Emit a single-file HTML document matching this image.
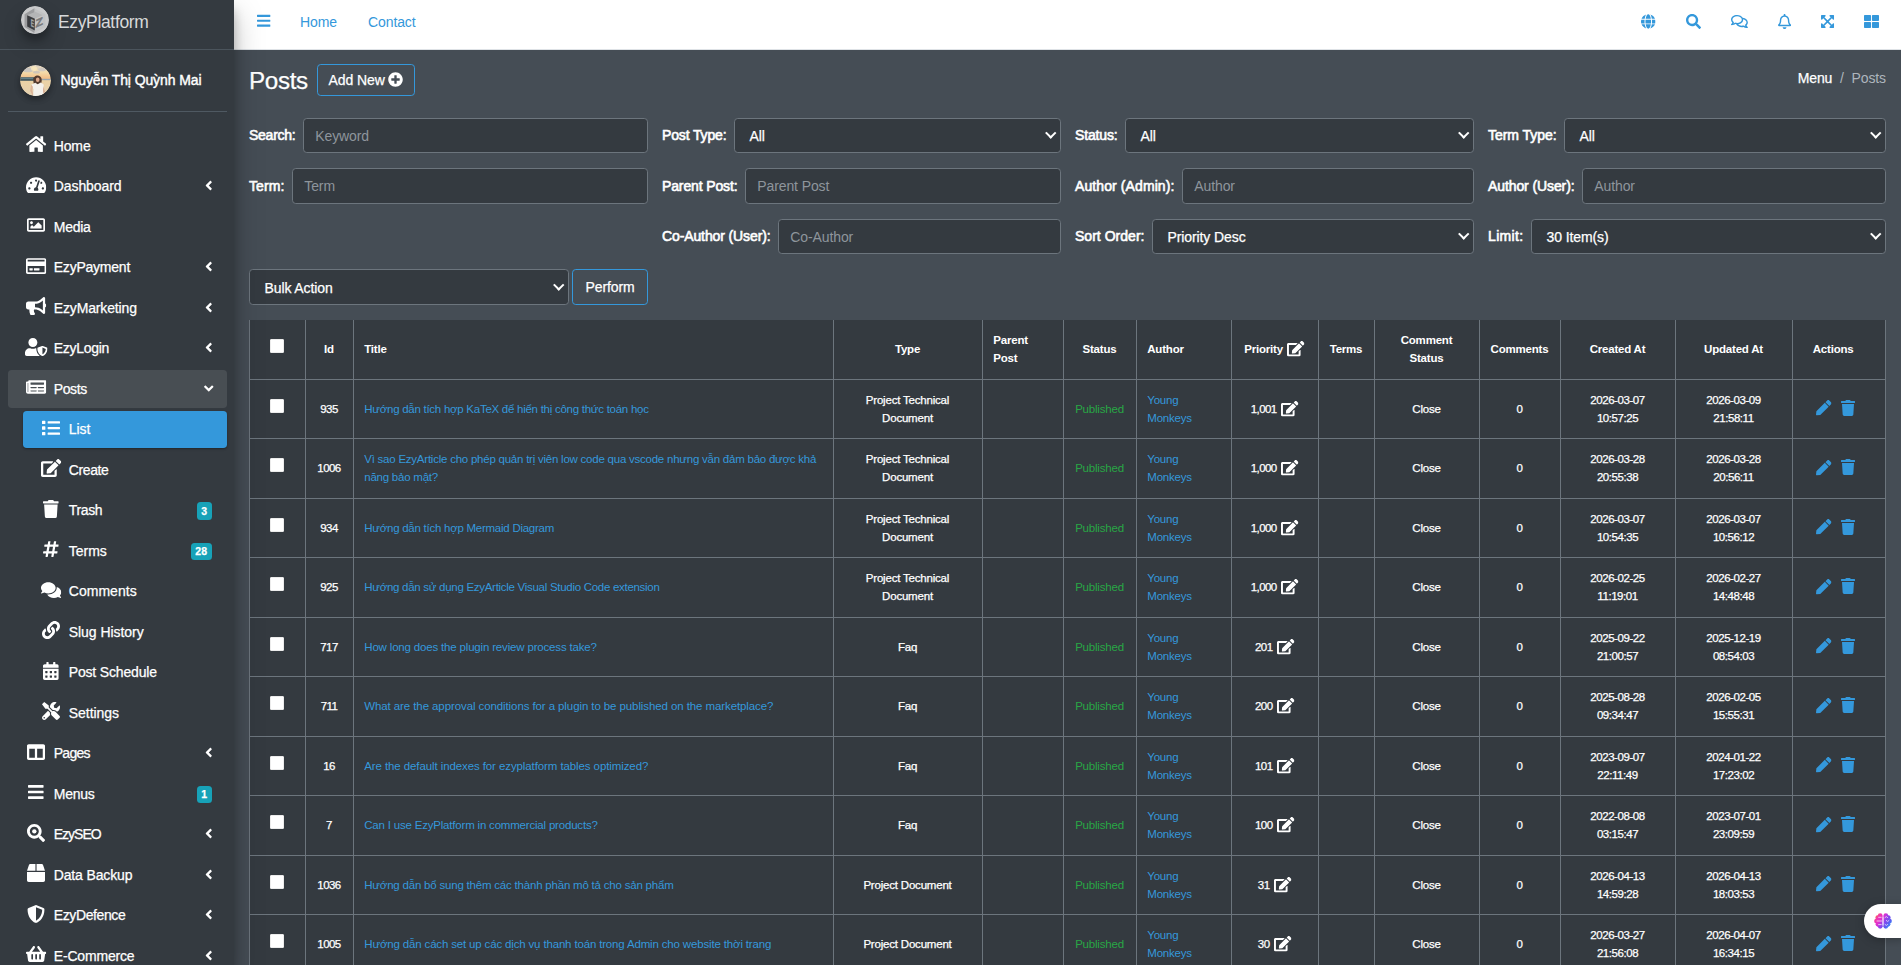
<!DOCTYPE html>
<html lang="en"><head><meta charset="utf-8"><title>Posts</title>
<style>
*{box-sizing:border-box}
html,body{margin:0;padding:0}
body{width:1903px;height:966px;overflow:hidden;background:#fff;font-family:"Liberation Sans",sans-serif;font-size:14px;line-height:22.5px;color:#fff;-webkit-text-stroke:.25px #fff}
a{text-decoration:none;color:#3498db}
.i{height:1em;width:auto;fill:currentColor;vertical-align:-.125em;overflow:visible}
.app{position:absolute;left:0;top:0;width:1901px;height:965px;overflow:hidden;background:#454d55}
/* sidebar */
.sidebar{position:absolute;left:0;top:0;width:234px;height:965px;background:#343a40;box-shadow:0 14px 28px rgba(0,0,0,.25),0 10px 10px rgba(0,0,0,.22);z-index:10}
.brand{display:block;height:50px;border-bottom:1px solid #4b545c;position:relative;color:rgba(255,255,255,.85)}
.logo{position:absolute;left:21px;top:6.300px;width:28px;height:28px;border-radius:50%;box-shadow:0 10px 20px rgba(0,0,0,.19),0 6px 6px rgba(0,0,0,.23)}
.bt{position:absolute;left:58px;top:8px;font-size:17.500px;line-height:28px;letter-spacing:-.35px;color:rgba(255,255,255,.82);-webkit-text-stroke:0}
.user{position:absolute;left:7.5px;right:7.5px;top:50px;height:62px;border-bottom:1px solid #4f5962}
svg text{-webkit-text-stroke:0}
.ava{position:absolute;left:12.500px;top:14.700px;width:31px;height:31px;border-radius:50%;box-shadow:0 3px 6px rgba(0,0,0,.16),0 3px 6px rgba(0,0,0,.23)}
.un{position:absolute;left:53px;top:18.500px;font-size:14px;line-height:22.500px;color:#fff;letter-spacing:-.1px;white-space:nowrap;-webkit-text-stroke:.4px #fff}
.nav{list-style:none;margin:0;padding:0;position:absolute;left:7.5px;right:7.5px;top:127.300px}
.nl{margin:0 0 3px 0;height:37.500px}
.nl a{display:block;position:relative;height:37.500px;border-radius:3.750px;color:#fff;padding:7.500px 15px}
.nl.sub{margin-left:15px}
.nl.open a{background:rgba(255,255,255,.1)}
.nl.act a{background:#3498db;box-shadow:0 1px 3px rgba(0,0,0,.12),0 1px 2px rgba(0,0,0,.24)}
.ni{display:inline-block;width:24px;margin-left:1.750px;margin-right:5.500px;text-align:center;font-size:18px;line-height:22.500px;vertical-align:top}
.ni .i{vertical-align:-1.500px}
.nl p{display:inline;margin:0;font-size:14px;letter-spacing:-.1px;white-space:nowrap}
.arr{position:absolute;right:14.300px;top:10.500px;font-size:15px;line-height:15px}
.arr .i{height:15px;vertical-align:top}
.arr.dn .i{transform:rotate(-90deg)}
.bdg{position:absolute;right:15px;top:10.500px;background:#17a2b8;color:#fff;font-weight:700;font-size:10.500px;line-height:11px;padding:3.300px 4.500px;border-radius:3.500px}
/* topbar */
.topbar{position:absolute;left:234px;top:0;width:1667px;height:50px;background:#fff;border-bottom:1px solid #dee2e6}
.topbar>*{position:absolute;margin-left:-234px}
.tb-i{top:11px;font-size:15.500px;color:#3498db;line-height:22.500px}
.tl{top:11px;font-size:14px;line-height:22.500px;color:#3498db;letter-spacing:-.1px;-webkit-text-stroke:0}
.tb-r{top:11.500px;font-size:15px;color:#3498db;line-height:22.500px}
/* content */
.content{position:absolute;left:234px;top:50px;width:1667px;padding:0 15px}
.hdr{position:relative;height:67.700px}
.hdr h1{position:absolute;left:0;top:15px;margin:0;font-size:24.200px;line-height:32px;font-weight:400;letter-spacing:-.35px}
.btn{display:inline-block;border:1px solid #3498db;border-radius:3.750px;color:#fff;font-size:14px;line-height:22.500px;text-align:center;white-space:nowrap;letter-spacing:-.1px}
.addnew{position:absolute;left:68px;top:14px;width:98px;height:32px;padding:3.750px 0 0 0}
.addnew .pc{height:15px;vertical-align:-2.500px;margin-left:0}
.crumb{position:absolute;right:0;top:17px;font-size:14px;line-height:22.500px;letter-spacing:-.1px}
.crumb .sl{color:#adb5bd;margin:0 7.700px;-webkit-text-stroke:0}
.crumb .p{color:#adb5bd;-webkit-text-stroke:0}
.fr{display:flex;margin:0 -7.500px 14.750px -7.500px;height:35.750px}
.fc{flex:0 0 25%;max-width:25%;padding:0 6.500px 0 7.500px;display:flex;align-items:center}
.fc:last-child{padding-right:7.500px}
.fc label{position:relative;top:.5px;font-weight:400;font-size:14px;letter-spacing:.05px;-webkit-text-stroke:.6px #fff;margin-right:7.500px;white-space:nowrap}
.inp{display:block;flex:1 1 auto;height:35.750px;background:#343a40;border:1px solid #6c757d;border-radius:3.750px;padding:5.625px 11.250px;font-size:14px;line-height:22.500px;color:#fff;letter-spacing:-.1px;white-space:nowrap;position:relative}
.inp.ph{color:#8e959c;-webkit-text-stroke:0}
.inp.sel{padding-left:14.500px;padding-top:6.300px}
.inp.sel:after{content:"";position:absolute;right:5.750px;top:10.600px;width:5.500px;height:5.500px;border-right:2px solid #fff;border-bottom:2px solid #fff;transform:rotate(45deg)}
.bulk .inp{flex:0 0 320px}
.perform{margin-left:3px;width:76px;flex:0 0 76px;height:35.750px;padding:5.625px 0}
/* table */
.tbl{border-collapse:separate;border-spacing:0;table-layout:fixed;width:1637px;margin-top:15.140px;background:#343a40;font-size:11.500px;line-height:18px;color:#fff}
.tbl th,.tbl td{border:0 solid #6c757d;border-width:0 1px 1px 0;padding:11.250px 11.250px 11.250px 10.250px;vertical-align:middle;text-align:left;letter-spacing:-.2px}
.tbl th{font-weight:700;height:59.500px;-webkit-text-stroke:0}
.tbl tr>*:first-child{border-left-width:1px}
.tbl td{height:59.500px}
.tbl .c{text-align:center}
.tbl .pub{color:#28a745;-webkit-text-stroke:0}
.tbl td a{color:#3498db;-webkit-text-stroke:0}
.cb{display:inline-block;width:14px;height:14px;background:#fff;border:1px solid #ececec;border-radius:1px;vertical-align:top;margin-top:-.9px;margin-left:.8px}
.ed{height:15.500px;vertical-align:-3.500px;margin-left:1.500px;margin-top:-3px}
.act{color:#3498db}
.act .pn{height:15.500px;margin-right:9px;vertical-align:-3px}
.act .tr{height:16px;vertical-align:-3px}
.tbl td.act{padding-right:17px}
.tbl th:last-child{padding-right:22px}
.fab{position:absolute;left:1864px;top:904px;width:40px;height:34px;background:#fff;border-radius:17px 0 0 17px;box-shadow:0 2px 10px rgba(0,0,0,.25);z-index:20}
.fab svg{position:absolute;left:9.500px;top:9px}
.fr:first-child .inp{padding-top:6.325px}
.fr:first-child .inp.sel{padding-top:6.800px}
.fr:first-child label{top:0}
.fr:nth-child(3) label{top:-.4px}
.fr:nth-child(3) .inp.ph{padding-top:6.500px}
.fr:nth-child(4) .inp.sel{padding-top:7.100px}
.tbl td.n{letter-spacing:-.55px}
.tbl td.d{letter-spacing:-.45px}
</style></head><body>
<svg width="0" height="0" style="position:absolute"><defs><symbol id="i-angle" viewBox="0 0 256 512"><path d="M31.7 239l136-136c9.4-9.4 24.6-9.4 33.9 0l22.6 22.6c9.4 9.4 9.4 24.6 0 33.9L127.9 256l96.4 96.4c9.4 9.4 9.4 24.6 0 33.9L201.7 409c-9.4 9.4-24.6 9.4-33.9 0l-136-136c-9.5-9.4-9.5-24.6-.1-34z"/></symbol><symbol id="i-bars" viewBox="0 0 448 512"><path d="M16 132h416c8.837 0 16-7.163 16-16V76c0-8.837-7.163-16-16-16H16C7.163 60 0 67.163 0 76v40c0 8.837 7.163 16 16 16zm0 160h416c8.837 0 16-7.163 16-16v-40c0-8.837-7.163-16-16-16H16c-8.837 0-16 7.163-16 16v40c0 8.837 7.163 16 16 16zm0 160h416c8.837 0 16-7.163 16-16v-40c0-8.837-7.163-16-16-16H16c-8.837 0-16 7.163-16 16v40c0 8.837 7.163 16 16 16z"/></symbol><symbol id="i-basket" viewBox="0 0 576 512"><path d="M576 216v16c0 13.255-10.745 24-24 24h-8l-26.113 182.788C514.509 462.435 494.257 480 470.37 480H105.63c-23.887 0-44.139-17.565-47.518-41.212L32 256h-8c-13.255 0-24-10.745-24-24v-16c0-13.255 10.745-24 24-24h67.341l106.78-146.821c10.395-14.292 30.407-17.453 44.701-7.058 14.293 10.395 17.453 30.408 7.058 44.701L170.477 192h235.046L326.12 82.821c-10.395-14.292-7.234-34.306 7.059-44.701 14.291-10.395 34.306-7.235 44.701 7.058L484.659 192H552c13.255 0 24 10.745 24 24zM312 392V280c0-13.255-10.745-24-24-24s-24 10.745-24 24v112c0 13.255 10.745 24 24 24s24-10.745 24-24zm112 0V280c0-13.255-10.745-24-24-24s-24 10.745-24 24v112c0 13.255 10.745 24 24 24s24-10.745 24-24zm-224 0V280c0-13.255-10.745-24-24-24s-24 10.745-24 24v112c0 13.255 10.745 24 24 24s24-10.745 24-24z"/></symbol><symbol id="i-bellr" viewBox="0 0 448 512"><path d="M439.39 362.29c-19.320-20.760-55.470-51.990-55.470-154.290 0-77.700-54.480-139.900-127.940-155.160V32c0-17.670-14.320-32-31.980-32s-31.980 14.330-31.980 32v20.840C118.560 68.100 64.080 130.300 64.080 208c0 102.300-36.150 133.530-55.470 154.290-6 6.450-8.660 14.160-8.610 21.710.11 16.400 12.980 32 32.100 32h383.800c19.120 0 32-15.600 32.100-32 .05-7.550-2.610-15.270-8.610-21.710zM67.530 368c21.220-27.970 44.420-74.330 44.530-159.420 0-.2-.06-.38-.06-.58 0-61.860 50.140-112 112-112s112 50.140 112 112c0 .2-.06.38-.06.58.11 85.100 23.310 131.460 44.530 159.420H67.530zM224 512c35.320 0 63.970-28.650 63.970-64H160.030c0 35.350 28.650 64 63.970 64z"/></symbol><symbol id="i-box" viewBox="0 0 512 512"><path d="M509.5 184.6L458.9 32.8C452.4 13.2 434.1 0 413.4 0H272v192h238.700c-.4-2.5-.4-5-1.200-7.400zM240 0H98.600c-20.700 0-39 13.200-45.500 32.800L2.500 184.600c-.8 2.400-.8 4.900-1.200 7.400H240V0zM0 224v240c0 26.500 21.500 48 48 48h416c26.500 0 48-21.500 48-48V224H0z"/></symbol><symbol id="i-bullhorn" viewBox="0 0 576 512"><path d="M576 240c0-23.63-12.95-44.04-32-55.120V32.010C544 23.260 537.020 0 512 0c-7.120 0-14.190 2.380-19.980 7.020l-85.030 68.030C364.280 109.190 310.660 128 256 128H64c-35.350 0-64 28.650-64 64v96c0 35.350 28.650 64 64 64h33.700c-1.390 10.480-2.180 21.140-2.180 32 0 39.770 9.260 77.350 25.560 110.940 5.190 10.690 16.520 17.060 28.400 17.060h74.280c26.050 0 41.690-29.840 25.900-50.560-16.400-21.520-26.150-48.360-26.150-77.440 0-11.110 1.620-21.790 4.410-32H256c54.660 0 108.280 18.810 150.980 52.950l85.030 68.030a32.023 32.023 0 0 0 19.980 7.020c24.920 0 32-22.780 32-32V295.130C563.050 284.040 576 263.630 576 240zm-96 141.420l-33.050-26.440C392.950 311.780 325.120 288 256 288v-96c69.120 0 136.950-23.780 190.950-66.980L480 98.580v282.840z"/></symbol><symbol id="i-calendar" viewBox="0 0 448 512"><path d="M0 464c0 26.500 21.500 48 48 48h352c26.500 0 48-21.500 48-48V192H0v272zm320-196c0-6.600 5.400-12 12-12h40c6.600 0 12 5.400 12 12v40c0 6.600-5.400 12-12 12h-40c-6.600 0-12-5.400-12-12v-40zm0 128c0-6.600 5.400-12 12-12h40c6.600 0 12 5.400 12 12v40c0 6.600-5.400 12-12 12h-40c-6.600 0-12-5.400-12-12v-40zM192 268c0-6.600 5.400-12 12-12h40c6.600 0 12 5.400 12 12v40c0 6.600-5.400 12-12 12h-40c-6.600 0-12-5.400-12-12v-40zm0 128c0-6.600 5.400-12 12-12h40c6.600 0 12 5.400 12 12v40c0 6.600-5.400 12-12 12h-40c-6.600 0-12-5.400-12-12v-40zM64 268c0-6.600 5.400-12 12-12h40c6.600 0 12 5.400 12 12v40c0 6.600-5.400 12-12 12H76c-6.600 0-12-5.400-12-12v-40zm0 128c0-6.600 5.400-12 12-12h40c6.600 0 12 5.400 12 12v40c0 6.600-5.400 12-12 12H76c-6.600 0-12-5.400-12-12v-40zM400 64h-48V16c0-8.800-7.200-16-16-16h-32c-8.800 0-16 7.200-16 16v48H160V16c0-8.800-7.200-16-16-16h-32c-8.800 0-16 7.200-16 16v48H48C21.500 64 0 85.500 0 112v48h448v-48c0-26.500-21.500-48-48-48z"/></symbol><symbol id="i-columns" viewBox="0 0 512 512"><path d="M464 32H48C21.49 32 0 53.49 0 80v352c0 26.51 21.49 48 48 48h416c26.51 0 48-21.49 48-48V80c0-26.51-21.49-48-48-48zM224 416H64V160h160v256zm224 0H288V160h160v256z"/></symbol><symbol id="i-comments" viewBox="0 0 576 512"><path d="M416 192c0-88.4-93.1-160-208-160S0 103.6 0 192c0 34.3 14.1 65.9 38 92-13.4 30.2-35.5 54.2-35.8 54.5-2.2 2.3-2.8 5.7-1.5 8.700S4.800 352 8 352c36.600 0 66.900-12.300 88.700-25 32.200 15.700 70.300 25 111.300 25 114.900 0 208-71.600 208-160zm122 220c23.900-26 38-57.700 38-92 0-66.900-53.500-124.200-129.300-148.100.900 6.600 1.300 13.300 1.300 20.100 0 105.900-107.700 192-240 192-10.800 0-21.300-.800-31.700-1.900C207.800 439.600 281.800 480 368 480c41 0 79.100-9.200 111.300-25 21.800 12.700 52.100 25 88.700 25 3.200 0 6.100-1.900 7.300-4.800 1.300-2.900.700-6.300-1.500-8.700-.300-.300-22.400-24.200-35.800-54.500z"/></symbol><symbol id="i-commentsr" viewBox="0 0 576 512"><path d="M532 386.200c27.500-27.100 44-61.100 44-98.200 0-80-76.500-146.100-176.200-157.900C368.300 72.500 294.300 32 208 32 93.100 32 0 103.600 0 192c0 37 16.500 71 44 98.200-15.300 30.700-37.300 54.500-37.700 54.900-6.300 6.700-8.100 16.500-4.400 25 3.600 8.500 12 14 21.200 14 53.500 0 96.700-20.200 125.200-38.800 9.200 2.100 18.700 3.700 28.400 4.900C208.100 407.600 281.800 448 368 448c20.800 0 40.800-2.400 59.800-6.800C456.300 459.700 499.400 480 553 480c9.200 0 17.500-5.500 21.200-14 3.600-8.500 1.900-18.300-4.400-25-.4-.3-22.500-24.100-37.800-54.800zm-392.800-92.300L122.100 305c-14.100 9.100-28.500 16.300-43.100 21.400 2.700-4.700 5.400-9.700 8-14.800l15.500-31.100L77.700 256C64.200 242.600 48 220.700 48 192c0-60.700 73.300-112 160-112s160 51.300 160 112-73.300 112-160 112c-16.500 0-33-1.900-49-5.600l-19.800-4.500zM498.300 352l-24.700 24.400 15.500 31.100c2.600 5.100 5.300 10.100 8 14.800-14.600-5.100-29-12.300-43.100-21.400l-17.100-11.100-19.900 4.600c-16 3.700-32.500 5.600-49 5.600-54 0-102.200-20.100-131.300-49.700C338 339.500 416 272.900 416 192c0-3.400-.4-6.700-.7-10C479.700 196.500 528 238.800 528 288c0 28.700-16.200 50.600-29.700 64z"/></symbol><symbol id="i-creditcardr" viewBox="0 0 576 512"><path d="M527.9 32H48.1C21.5 32 0 53.5 0 79.9v352.200C0 458.500 21.500 480 48.100 480h479.800c26.600 0 48.100-21.500 48.100-47.900V79.900c0-26.400-21.500-47.900-48.100-47.900zM54.100 80h467.800c3.300 0 6 2.700 6 6v42H48.100V86c0-3.300 2.700-6 6-6zm467.800 352H54.100c-3.300 0-6-2.700-6-6V256h479.800v170c0 3.300-2.700 6-6 6zM192 332v40c0 6.600-5.400 12-12 12h-72c-6.600 0-12-5.400-12-12v-40c0-6.600 5.400-12 12-12h72c6.600 0 12 5.400 12 12zm192 0v40c0 6.600-5.400 12-12 12H236c-6.600 0-12-5.400-12-12v-40c0-6.600 5.400-12 12-12h136c6.600 0 12 5.400 12 12z"/></symbol><symbol id="i-edit" viewBox="0 0 576 512"><path d="M402.6 83.2l90.2 90.2c3.8 3.8 3.8 10 0 13.8L274.4 405.6l-92.8 10.3c-12.4 1.4-22.9-9.1-21.5-21.5l10.3-92.8L388.8 83.2c3.8-3.8 10-3.8 13.8 0zm162-22.9l-48.8-48.8c-15.2-15.2-39.9-15.2-55.2 0l-35.4 35.4c-3.8 3.8-3.8 10 0 13.8l90.2 90.2c3.8 3.8 10 3.8 13.8 0l35.4-35.4c15.2-15.3 15.2-40 0-55.2zM384 346.2V448H64V128h229.8c3.2 0 6.2-1.3 8.5-3.5l40-40c7.6-7.6 2.2-20.5-8.5-20.5H48C21.5 64 0 85.5 0 112v352c0 26.5 21.5 48 48 48h352c26.5 0 48-21.5 48-48V306.2c0-10.7-12.9-16-20.5-8.5l-40 40c-2.200 2.300-3.500 5.300-3.500 8.500z"/></symbol><symbol id="i-expand" viewBox="0 0 448 512"><path d="M448 344v112a23.940 23.940 0 0 1-24 24H312c-21.390 0-32.090-25.900-17-41l36.200-36.200L224 295.600 116.770 402.900 153 439c15.090 15.100 4.390 41-17 41H24a23.940 23.940 0 0 1-24-24V344c0-21.400 25.890-32.100 41-17l36.190 36.200L184.460 256 77.180 148.700 41 185c-15.100 15.100-41 4.400-41-17V56a23.940 23.940 0 0 1 24-24h112c21.390 0 32.090 25.900 17 41l-36.200 36.200L224 216.400l107.230-107.300L295 73c-15.090-15.100-4.390-41 17-41h112a23.940 23.940 0 0 1 24 24v112c0 21.400-25.890 32.100-41 17l-36.190-36.200L263.540 256l107.280 107.300L407 327.100c15.100-15.200 41-4.500 41 16.900z"/></symbol><symbol id="i-globe" viewBox="0 0 496 512"><path d="M336.5 160C322 70.700 287.800 8 248 8s-74 62.700-88.500 152h177zM152 256c0 22.200 1.200 43.500 3.300 64h185.300c2.100-20.500 3.300-41.800 3.300-64s-1.200-43.500-3.300-64H155.300c-2.100 20.500-3.300 41.800-3.300 64zm324.700-96c-28.600-67.900-86.500-120.400-158-141.600 24.400 33.800 41.200 84.700 50 141.600h108zM177.200 18.400C105.800 39.600 47.800 92.100 19.300 160h108c8.700-56.900 25.500-107.800 49.900-141.600zM487.400 192H372.700c2.100 21 3.300 42.500 3.300 64s-1.200 43-3.300 64h114.600c5.500-20.500 8.600-41.800 8.600-64s-3.100-43.500-8.500-64zM120 256c0-21.500 1.200-43 3.300-64H8.600C3.200 212.500 0 233.800 0 256s3.200 43.500 8.600 64h114.600c-2-21-3.200-42.500-3.200-64zm39.500 96c14.500 89.300 48.700 152 88.500 152s74-62.700 88.500-152h-177zm159.300 141.600c71.400-21.200 129.400-73.700 158-141.600h-108c-8.800 56.900-25.600 107.800-50 141.600zM19.300 352c28.600 67.900 86.500 120.400 158 141.600-24.400-33.800-41.200-84.700-50-141.600h-108z"/></symbol><symbol id="i-hashtag" viewBox="0 0 448 512"><path d="M440.667 182.109l7.143-40c1.313-7.355-4.342-14.109-11.813-14.109h-74.81l14.623-81.891C377.123 38.754 371.468 32 363.997 32h-40.632a12 12 0 0 0-11.813 9.891L296.175 128H197.54l14.623-81.891C213.477 38.754 207.822 32 200.35 32h-40.632a12 12 0 0 0-11.813 9.891L132.528 128H53.432a12 12 0 0 0-11.813 9.891l-7.143 40C33.163 185.246 38.818 192 46.289 192h74.81L98.242 320H19.146a12 12 0 0 0-11.813 9.891l-7.143 40C-1.123 377.246 4.532 384 12.003 384h74.81L72.19 465.891C70.877 473.246 76.532 480 84.003 480h40.632a12 12 0 0 0 11.813-9.891L151.826 384h98.634l-14.623 81.891C234.523 473.246 240.178 480 247.65 480h40.632a12 12 0 0 0 11.813-9.891L315.472 384h79.096a12 12 0 0 0 11.813-9.891l7.143-40c1.313-7.355-4.342-14.109-11.813-14.109h-74.81l22.857-128h79.096a12 12 0 0 0 11.813-9.891zM261.889 320h-98.634l22.857-128h98.634l-22.857 128z"/></symbol><symbol id="i-home" viewBox="0 0 576 512"><path d="M280.37 148.26L96 300.11V464a16 16 0 0 0 16 16l112.06-.29a16 16 0 0 0 15.92-16V368a16 16 0 0 1 16-16h64a16 16 0 0 1 16 16v95.64a16 16 0 0 0 16 16.05L464 480a16 16 0 0 0 16-16V300L295.67 148.26a12.19 12.19 0 0 0-15.3 0zM571.6 251.47L488 182.56V44.05a12 12 0 0 0-12-12h-56a12 12 0 0 0-12 12v72.61L318.47 43a48 48 0 0 0-61 0L4.34 251.47a12 12 0 0 0-1.6 16.9l25.5 31A12 12 0 0 0 45.15 301l235.22-193.74a12.19 12.19 0 0 1 15.3 0L530.9 301a12 12 0 0 0 16.9-1.6l25.5-31a12 12 0 0 0-1.7-16.93z"/></symbol><symbol id="i-imager" viewBox="0 0 512 512"><path d="M464 64H48C21.49 64 0 85.49 0 112v288c0 26.51 21.49 48 48 48h416c26.51 0 48-21.49 48-48V112c0-26.51-21.49-48-48-48zm-6 336H54a6 6 0 0 1-6-6V118a6 6 0 0 1 6-6h404a6 6 0 0 1 6 6v276a6 6 0 0 1-6 6zM128 152c-22.091 0-40 17.909-40 40s17.909 40 40 40 40-17.909 40-40-17.909-40-40-40zM96 352h320v-80l-87.515-87.515c-4.686-4.686-12.284-4.686-16.971 0L192 304l-39.515-39.515c-4.686-4.686-12.284-4.686-16.971 0L96 304v48z"/></symbol><symbol id="i-link" viewBox="0 0 512 512"><path d="M326.612 185.391c59.747 59.809 58.927 155.698.36 214.59-.11.12-.24.25-.36.37l-67.2 67.2c-59.27 59.27-155.699 59.262-214.96 0-59.27-59.26-59.27-155.7 0-214.96l37.106-37.106c9.84-9.84 26.786-3.3 27.294 10.606.648 17.722 3.826 35.527 9.69 52.721 1.986 5.822.567 12.262-3.783 16.612l-13.087 13.087c-28.026 28.026-28.905 73.66-1.155 101.96 28.024 28.579 74.086 28.749 102.325.51l67.2-67.19c28.191-28.191 28.073-73.757 0-101.83-3.701-3.694-7.429-6.564-10.341-8.569a16.037 16.037 0 0 1-6.947-12.606c-.396-10.567 3.348-21.456 11.698-29.806l21.054-21.055c5.521-5.521 14.182-6.199 20.584-1.731a152.482 152.482 0 0 1 20.522 17.197zM467.547 44.449c-59.261-59.262-155.69-59.27-214.96 0l-67.2 67.2c-.12.12-.25.25-.36.37-58.566 58.892-59.387 154.781.36 214.59a152.454 152.454 0 0 0 20.521 17.196c6.402 4.468 15.064 3.789 20.584-1.731l21.054-21.055c8.35-8.35 12.094-19.239 11.698-29.806a16.037 16.037 0 0 0-6.947-12.606c-2.912-2.005-6.64-4.875-10.341-8.569-28.073-28.073-28.191-73.639 0-101.83l67.2-67.19c28.239-28.239 74.3-28.069 102.325.51 27.75 28.3 26.872 73.934-1.155 101.96l-13.087 13.087c-4.35 4.35-5.769 10.79-3.783 16.612 5.864 17.194 9.042 34.999 9.69 52.721.509 13.906 17.454 20.446 27.294 10.606l37.106-37.106c59.271-59.259 59.271-155.699.001-214.959z"/></symbol><symbol id="i-list" viewBox="0 0 512 512"><path d="M80 368H16a16 16 0 0 0-16 16v64a16 16 0 0 0 16 16h64a16 16 0 0 0 16-16v-64a16 16 0 0 0-16-16zm0-320H16A16 16 0 0 0 0 64v64a16 16 0 0 0 16 16h64a16 16 0 0 0 16-16V64a16 16 0 0 0-16-16zm0 160H16a16 16 0 0 0-16 16v64a16 16 0 0 0 16 16h64a16 16 0 0 0 16-16v-64a16 16 0 0 0-16-16zm416 176H176a16 16 0 0 0-16 16v32a16 16 0 0 0 16 16h320a16 16 0 0 0 16-16v-32a16 16 0 0 0-16-16zm0-320H176a16 16 0 0 0-16 16v32a16 16 0 0 0 16 16h320a16 16 0 0 0 16-16V80a16 16 0 0 0-16-16zm0 160H176a16 16 0 0 0-16 16v32a16 16 0 0 0 16 16h320a16 16 0 0 0 16-16v-32a16 16 0 0 0-16-16z"/></symbol><symbol id="i-newspaper" viewBox="0 0 576 512"><path d="M552 64H88c-13.255 0-24 10.745-24 24v8H24c-13.255 0-24 10.745-24 24v272c0 30.928 25.072 56 56 56h472c26.510 0 48-21.490 48-48V88c0-13.255-10.745-24-24-24zM56 400a8 8 0 0 1-8-8V144h16v248a8 8 0 0 1-8 8zm236-16H140c-6.627 0-12-5.373-12-12v-8c0-6.627 5.373-12 12-12h152c6.627 0 12 5.373 12 12v8c0 6.627-5.373 12-12 12zm208 0H348c-6.627 0-12-5.373-12-12v-8c0-6.627 5.373-12 12-12h152c6.627 0 12 5.373 12 12v8c0 6.627-5.373 12-12 12zm-208-96H140c-6.627 0-12-5.373-12-12v-8c0-6.627 5.373-12 12-12h152c6.627 0 12 5.373 12 12v8c0 6.627-5.373 12-12 12zm208 0H348c-6.627 0-12-5.373-12-12v-8c0-6.627 5.373-12 12-12h152c6.627 0 12 5.373 12 12v8c0 6.627-5.373 12-12 12zm0-96H140c-6.627 0-12-5.373-12-12v-40c0-6.627 5.373-12 12-12h360c6.627 0 12 5.373 12 12v40c0 6.627-5.373 12-12 12z"/></symbol><symbol id="i-pen" viewBox="0 0 512 512"><path d="M290.74 93.24l128.02 128.02-277.99 277.99-114.14 12.6C11.35 513.54-1.56 500.62.14 485.34l12.7-114.22 277.9-277.88zm207.2-19.06l-60.11-60.11c-18.75-18.75-49.16-18.75-67.91 0l-56.55 56.55 128.02 128.02 56.55-56.55c18.75-18.76 18.75-49.16 0-67.91z"/></symbol><symbol id="i-pluscircle" viewBox="0 0 512 512"><path d="M256 8C119 8 8 119 8 256s111 248 248 248 248-111 248-248S393 8 256 8zm144 276c0 6.6-5.4 12-12 12h-92v92c0 6.6-5.4 12-12 12h-56c-6.6 0-12-5.4-12-12v-92h-92c-6.6 0-12-5.4-12-12v-56c0-6.6 5.4-12 12-12h92v-92c0-6.6 5.4-12 12-12h56c6.6 0 12 5.4 12 12v92h92c6.6 0 12 5.4 12 12v56z"/></symbol><symbol id="i-search" viewBox="0 0 512 512"><path d="M505 442.7L405.3 343c-4.5-4.5-10.6-7-17-7H372c27.6-35.3 44-79.7 44-128C416 93.1 322.9 0 208 0S0 93.1 0 208s93.1 208 208 208c48.3 0 92.7-16.4 128-44v16.3c0 6.4 2.5 12.5 7 17l99.7 99.7c9.4 9.4 24.6 9.4 33.9 0l28.3-28.3c9.4-9.4 9.4-24.6.1-34zM208 336c-70.7 0-128-57.2-128-128 0-70.7 57.2-128 128-128 70.7 0 128 57.2 128 128 0 70.7-57.2 128-128 128z"/></symbol><symbol id="i-seo" viewBox="0 0 512 512"><path d="M505 442.7L405.3 343c-4.5-4.5-10.6-7-17-7H372c27.6-35.3 44-79.7 44-128C416 93.1 322.9 0 208 0S0 93.1 0 208s93.1 208 208 208c48.3 0 92.7-16.4 128-44v16.3c0 6.4 2.5 12.5 7 17l99.7 99.7c9.4 9.4 24.6 9.4 33.9 0l28.3-28.3c9.4-9.4 9.4-24.6.1-34zM208 336c-70.7 0-128-57.2-128-128 0-70.7 57.2-128 128-128 70.7 0 128 57.2 128 128 0 70.7-57.2 128-128 128z"/><circle cx="208" cy="208" r="62"/></symbol><symbol id="i-shield" viewBox="0 0 512 512"><path d="M466.5 83.7l-192-80a48.150 48.150 0 0 0-36.900 0l-192 80C27.700 91.100 16 108.600 16 128c0 198.500 114.500 335.700 221.500 380.300 11.800 4.900 25.100 4.900 36.900 0C360.100 472.600 496 349.300 496 128c0-19.400-11.700-36.900-29.500-44.300zM256.100 446.300l-.1-381 175.900 73.300c-3.300 151.400-82.100 261.100-175.800 307.700z"/></symbol><symbol id="i-tacho" viewBox="0 0 576 512"><path d="M288 32C128.940 32 0 160.940 0 320c0 52.800 14.250 102.260 39.060 144.800 5.610 9.620 16.300 15.200 27.440 15.200h443c11.140 0 21.830-5.580 27.440-15.200C561.750 422.260 576 372.800 576 320c0-159.060-128.940-288-288-288zm0 64c14.710 0 26.580 10.130 30.320 23.650-1.110 2.260-2.640 4.230-3.450 6.670l-9.220 27.670c-5.130 3.490-10.970 6.010-17.640 6.010-17.670 0-32-14.330-32-32S270.330 96 288 96zM96 384c-17.670 0-32-14.330-32-32s14.330-32 32-32 32 14.330 32 32-14.330 32-32 32zm48-160c-17.670 0-32-14.330-32-32s14.330-32 32-32 32 14.330 32 32-14.330 32-32 32zm246.770-72.410l-61.330 184C343.130 347.330 352 364.540 352 384c0 11.720-3.380 22.550-8.880 32H232.880c-5.500-9.450-8.880-20.280-8.880-32 0-33.940 26.500-61.430 59.900-63.590l61.340-184.010c4.170-12.560 17.730-19.450 30.360-15.170 12.570 4.190 19.350 17.790 15.170 30.360zm14.660 57.200l15.520-46.550c3.470-1.290 7.130-2.230 11.050-2.230 17.670 0 32 14.330 32 32s-14.330 32-32 32c-11.380-.01-20.890-6.280-26.570-15.220zM480 384c-17.670 0-32-14.330-32-32s14.330-32 32-32 32 14.330 32 32-14.330 32-32 32z"/></symbol><symbol id="i-thlarge" viewBox="0 0 512 512"><path d="M296 32h192c13.255 0 24 10.745 24 24v160c0 13.255-10.745 24-24 24H296c-13.255 0-24-10.745-24-24V56c0-13.255 10.745-24 24-24zm-80 0H24C10.745 32 0 42.745 0 56v160c0 13.255 10.745 24 24 24h192c13.255 0 24-10.745 24-24V56c0-13.255-10.745-24-24-24zM0 296v160c0 13.255 10.745 24 24 24h192c13.255 0 24-10.745 24-24V296c0-13.255-10.745-24-24-24H24c-13.255 0-24 10.745-24 24zm296 184h192c13.255 0 24-10.745 24-24V296c0-13.255-10.745-24-24-24H296c-13.255 0-24 10.745-24 24v160c0 13.255 10.745 24 24 24z"/></symbol><symbol id="i-tools" viewBox="0 0 512 512"><path d="M501.1 395.7L384 278.6c-23.100-23.100-57.600-27.600-85.400-13.900L192 158.100V96L64 0 0 64l96 128h62.100l106.600 106.600c-13.600 27.800-9.200 62.300 13.900 85.400l117.100 117.100c14.600 14.600 38.200 14.600 52.700 0l52.700-52.700c14.500-14.600 14.500-38.200 0-52.700zM331.700 225c28.300 0 54.900 11 74.900 31l19.400 19.400c15.800-6.900 30.800-16.500 43.800-29.500 37.100-37.100 49.700-89.300 37.900-136.700-2.200-9-13.500-12.100-20.100-5.500l-74.400 74.400-67.900-11.300L334 98.900l74.400-74.400c6.600-6.600 3.400-17.900-5.700-20.200-47.400-11.700-99.600.9-136.600 37.900-28.500 28.500-41.900 66.100-41.200 103.600l82.100 82.100c8.100-1.900 16.500-2.900 24.700-2.900zm-103.900 82l-56.700-56.700L18.700 402.800c-25 25-25 65.500 0 90.500s65.500 25 90.500 0l123.600-123.600c-7.600-19.900-9.900-41.600-5-62.700zM64 472c-13.200 0-24-10.800-24-24 0-13.300 10.700-24 24-24s24 10.700 24 24c0 13.200-10.700 24-24 24z"/></symbol><symbol id="i-trash" viewBox="0 0 448 512"><path d="M432 32H312l-9.4-18.7A24 24 0 0 0 281.1 0H166.8a23.72 23.72 0 0 0-21.4 13.3L136 32H16A16 16 0 0 0 0 48v32a16 16 0 0 0 16 16h416a16 16 0 0 0 16-16V48a16 16 0 0 0-16-16zM53.2 467a48 48 0 0 0 47.9 45h245.8a48 48 0 0 0 47.9-45L416 128H32z"/></symbol><symbol id="i-usershield" viewBox="0 0 640 512"><path d="M622.3 271.1l-115.2-45c-4.1-1.600-12.600-3.700-22.200 0l-115.200 45c-10.700 4.200-17.700 14-17.700 24.900 0 111.600 68.700 188.800 132.900 213.900 9.600 3.700 18 1.600 22.200 0C558.400 489.900 640 420.500 640 296c0-10.900-7-20.700-17.700-24.900zM496 462.400V273.300l95.500 37.300c-5.600 87.100-60.900 135.400-95.500 151.800zM224 256c70.700 0 128-57.300 128-128S294.700 0 224 0 96 57.300 96 128s57.300 128 128 128zm96 40c0-2.500.8-4.800 1.100-7.200-2.500-.1-4.900-.8-7.500-.8h-16.700c-22.200 10.200-46.900 16-72.900 16s-50.600-5.800-72.900-16h-16.700C60.200 288 0 348.200 0 422.400V464c0 26.500 21.500 48 48 48h352c6.800 0 13.300-1.500 19.200-4-54-42.900-99.200-116.700-99.200-212z"/></symbol></defs></svg>

<div class="app">
 <aside class="sidebar">
  <a class="brand"><svg class="logo" viewBox="0 0 28 28"><circle cx="14" cy="14" r="14" fill="#c9cacb"/><path d="M13.400 2.300L24.400 8.200V21L13.400 26.900L3.600 21V8.200z" fill="#c1c2c3"/><path d="M13.400 2.300L3.600 8.200V21L13.400 26.900z" fill="#9c9d9f"/><path d="M6.200 9.300L14.300 5.700L21.900 9.300L13.900 12.800z" fill="#b4b5b6"/><path d="M6.200 9.300L13.900 12.800V24.400L6.200 20.500z" fill="#3b3d40"/><path d="M13.900 12.800L21.900 9.300V19.600L13.900 24.400z" fill="#c4c5c6"/><text font-family="Liberation Sans, sans-serif" font-weight="700" font-size="10" fill="#a6a7a9" stroke="#a6a7a9" stroke-width=".3" transform="matrix(.5 .222 0 1 9.700 20)">E</text><text font-family="Liberation Sans, sans-serif" font-weight="700" font-size="11" fill="#77787a" stroke="#77787a" stroke-width=".5" transform="matrix(1.100 -.490 0 1 14.400 21.800)">Z</text></svg><span class="bt">EzyPlatform</span></a>
  <div class="user"><svg class="ava" viewBox="0 0 31 31"><defs><clipPath id="ac"><circle cx="15.500" cy="15.500" r="15.500"/></clipPath><linearGradient id="sky" x1="0" y1="0" x2="0" y2="1"><stop offset="0" stop-color="#d9cfc4"/><stop offset=".45" stop-color="#f3dcab"/><stop offset="1" stop-color="#f1b47c"/></linearGradient><linearGradient id="wat" x1="0" y1="0" x2="0" y2="1"><stop offset="0" stop-color="#ecd2a4"/><stop offset="1" stop-color="#e3d0b0"/></linearGradient></defs><g clip-path="url(#ac)"><rect width="31" height="15.500" fill="url(#sky)"/><ellipse cx="8" cy="5" rx="5.500" ry="2.300" fill="#bcbdc3" opacity=".7"/><ellipse cx="16.500" cy="7.300" rx="3.500" ry="1.300" fill="#bdbcc0" opacity=".7"/><ellipse cx="22" cy="4.500" rx="4" ry="1.800" fill="#c4c2c4" opacity=".7"/><ellipse cx="14" cy="3.500" rx="3" ry="2.500" fill="#fbe9bb" opacity=".8"/><rect y="15" width="31" height="16" fill="url(#wat)"/><rect y="12.200" width="15.500" height="3.600" fill="#43585f"/><rect x="1" y="12.700" width="12" height="1.200" fill="#7fa3ad" opacity=".6"/><rect x="21.500" y="13.800" width="9.500" height="1.400" fill="#9aa7ad"/><path d="M16 10.800c2.500-1 5 .5 5.600 3 .5 2-.3 3.500-.5 5.500l-1.500 3.500-4.800-.5c-1-3-1.800-5.500-1.300-8 .3-1.600 1.200-3 2.500-3.500z" fill="#523a2e"/><ellipse cx="17.700" cy="14.800" rx="1.800" ry="2.300" fill="#dba587"/><path d="M11.200 19.800l4-2 2.500 1.500 3-1.700 2.800 1.700.7 5.500-.7 6.500H13l.5-7z" fill="#f4f1ec"/><path d="M11.200 19.800l-1 6 2.300 4.500.8-1-1.200-4 .8-3.500z" fill="#ddb398"/><path d="M23.400 21l1.500 5.500-1.300 2.500-.6-3z" fill="#d7ab90"/></g></svg><span class="un">Nguyễn Thị Quỳnh Mai</span></div>
  <ul class="nav">
<li class="nl"><a><span class="ni ni-home"><svg class="i " viewBox="0 0 576 512"><use href="#i-home"/></svg></span><p style="letter-spacing:-0.14px">Home</p></a></li>
<li class="nl"><a><span class="ni ni-tacho"><svg class="i " viewBox="0 0 576 512"><use href="#i-tacho"/></svg></span><p style="letter-spacing:-0.08px">Dashboard</p><span class="arr"><svg class="i " viewBox="0 0 256 512"><use href="#i-angle"/></svg></span></a></li>
<li class="nl"><a><span class="ni ni-imager"><svg class="i " viewBox="0 0 512 512"><use href="#i-imager"/></svg></span><p style="letter-spacing:-0.27px">Media</p></a></li>
<li class="nl"><a><span class="ni ni-creditcardr"><svg class="i " viewBox="0 0 576 512"><use href="#i-creditcardr"/></svg></span><p style="letter-spacing:-0.23px">EzyPayment</p><span class="arr"><svg class="i " viewBox="0 0 256 512"><use href="#i-angle"/></svg></span></a></li>
<li class="nl"><a><span class="ni ni-bullhorn"><svg class="i " viewBox="0 0 576 512"><use href="#i-bullhorn"/></svg></span><p style="letter-spacing:-0.14px">EzyMarketing</p><span class="arr"><svg class="i " viewBox="0 0 256 512"><use href="#i-angle"/></svg></span></a></li>
<li class="nl"><a><span class="ni ni-usershield"><svg class="i " viewBox="0 0 640 512"><use href="#i-usershield"/></svg></span><p style="letter-spacing:-0.3px">EzyLogin</p><span class="arr"><svg class="i " viewBox="0 0 256 512"><use href="#i-angle"/></svg></span></a></li>
<li class="nl open"><a><span class="ni ni-newspaper"><svg class="i " viewBox="0 0 576 512"><use href="#i-newspaper"/></svg></span><p style="letter-spacing:-0.38px">Posts</p><span class="arr dn"><svg class="i " viewBox="0 0 256 512"><use href="#i-angle"/></svg></span></a></li>
<li class="nl sub act"><a><span class="ni ni-list"><svg class="i " viewBox="0 0 512 512"><use href="#i-list"/></svg></span><p style="letter-spacing:-0.07px">List</p></a></li>
<li class="nl sub"><a><span class="ni ni-edit"><svg class="i " viewBox="0 0 576 512"><use href="#i-edit"/></svg></span><p style="letter-spacing:-0.39px">Create</p></a></li>
<li class="nl sub"><a><span class="ni ni-trash"><svg class="i " viewBox="0 0 448 512"><use href="#i-trash"/></svg></span><p style="letter-spacing:-0.36px">Trash</p><span class="bdg">3</span></a></li>
<li class="nl sub"><a><span class="ni ni-hashtag"><svg class="i " viewBox="0 0 448 512"><use href="#i-hashtag"/></svg></span><p style="letter-spacing:-0.01px">Terms</p><span class="bdg">28</span></a></li>
<li class="nl sub"><a><span class="ni ni-comments"><svg class="i " viewBox="0 0 576 512"><use href="#i-comments"/></svg></span><p style="letter-spacing:0.03px">Comments</p></a></li>
<li class="nl sub"><a><span class="ni ni-link"><svg class="i " viewBox="0 0 512 512"><use href="#i-link"/></svg></span><p style="letter-spacing:-0.05px">Slug History</p></a></li>
<li class="nl sub"><a><span class="ni ni-calendar"><svg class="i " viewBox="0 0 448 512"><use href="#i-calendar"/></svg></span><p style="letter-spacing:-0.17px">Post Schedule</p></a></li>
<li class="nl sub"><a><span class="ni ni-tools"><svg class="i " viewBox="0 0 512 512"><use href="#i-tools"/></svg></span><p style="letter-spacing:-0.04px">Settings</p></a></li>
<li class="nl"><a><span class="ni ni-columns"><svg class="i " viewBox="0 0 512 512"><use href="#i-columns"/></svg></span><p style="letter-spacing:-0.72px">Pages</p><span class="arr"><svg class="i " viewBox="0 0 256 512"><use href="#i-angle"/></svg></span></a></li>
<li class="nl"><a><span class="ni ni-bars"><svg class="i " viewBox="0 0 448 512"><use href="#i-bars"/></svg></span><p style="letter-spacing:-0.25px">Menus</p><span class="bdg">1</span></a></li>
<li class="nl"><a><span class="ni ni-seo"><svg class="i " viewBox="0 0 512 512"><use href="#i-seo"/></svg></span><p style="letter-spacing:-1.0px">EzySEO</p><span class="arr"><svg class="i " viewBox="0 0 256 512"><use href="#i-angle"/></svg></span></a></li>
<li class="nl"><a><span class="ni ni-box"><svg class="i " viewBox="0 0 512 512"><use href="#i-box"/></svg></span><p style="letter-spacing:-0.14px">Data Backup</p><span class="arr"><svg class="i " viewBox="0 0 256 512"><use href="#i-angle"/></svg></span></a></li>
<li class="nl"><a><span class="ni ni-shield"><svg class="i " viewBox="0 0 512 512"><use href="#i-shield"/></svg></span><p style="letter-spacing:-0.39px">EzyDefence</p><span class="arr"><svg class="i " viewBox="0 0 256 512"><use href="#i-angle"/></svg></span></a></li>
<li class="nl"><a><span class="ni ni-basket"><svg class="i " viewBox="0 0 576 512"><use href="#i-basket"/></svg></span><p style="letter-spacing:-0.18px">E-Commerce</p><span class="arr"><svg class="i " viewBox="0 0 256 512"><use href="#i-angle"/></svg></span></a></li>
  </ul>
 </aside>
 <nav class="topbar">
  <span class="tb-i" style="left:257px"><svg class="i " viewBox="0 0 448 512"><use href="#i-bars"/></svg></span>
  <a class="tl" style="left:300px">Home</a>
  <a class="tl" style="left:368px">Contact</a>
  <span class="tb-r" style="left:1641px"><svg class="i " viewBox="0 0 496 512"><use href="#i-globe"/></svg></span>
  <span class="tb-r" style="left:1686px"><svg class="i " viewBox="0 0 512 512"><use href="#i-search"/></svg></span>
  <span class="tb-r" style="left:1731px"><svg class="i " viewBox="0 0 576 512"><use href="#i-commentsr"/></svg></span>
  <span class="tb-r" style="left:1777.700px"><svg class="i " viewBox="0 0 448 512"><use href="#i-bellr"/></svg></span>
  <span class="tb-r" style="left:1820.700px"><svg class="i " viewBox="0 0 448 512"><use href="#i-expand"/></svg></span>
  <span class="tb-r" style="left:1863.700px"><svg class="i " viewBox="0 0 512 512"><use href="#i-thlarge"/></svg></span>
 </nav>
 <main class="content">
  <div class="hdr"><h1>Posts</h1><a class="btn addnew">Add New <svg class="i pc" viewBox="0 0 512 512"><use href="#i-pluscircle"/></svg></a>
   <div class="crumb"><span class="m">Menu</span><span class="sl">/</span><span class="p">Posts</span></div></div>
  <form class="filters">
   <div class="fr">
    <div class="fc"><label style="letter-spacing:-0.251px">Search:</label><span class="inp ph">Keyword</span></div>
    <div class="fc"><label style="letter-spacing:-0.141px">Post Type:</label><span class="inp sel">All</span></div>
    <div class="fc"><label style="letter-spacing:-0.156px">Status:</label><span class="inp sel">All</span></div>
    <div class="fc"><label style="letter-spacing:-0.05px">Term Type:</label><span class="inp sel">All</span></div>
   </div>
   <div class="fr">
    <div class="fc"><label style="letter-spacing:0.1px">Term:</label><span class="inp ph">Term</span></div>
    <div class="fc"><label style="letter-spacing:-0.13px">Parent Post:</label><span class="inp ph">Parent Post</span></div>
    <div class="fc"><label style="letter-spacing:0.097px">Author (Admin):</label><span class="inp ph">Author</span></div>
    <div class="fc"><label style="letter-spacing:-0.102px">Author (User):</label><span class="inp ph">Author</span></div>
   </div>
   <div class="fr">
    <div class="fc"></div>
    <div class="fc"><label style="letter-spacing:-0.116px">Co-Author (User):</label><span class="inp ph">Co-Author</span></div>
    <div class="fc"><label style="letter-spacing:0.023px">Sort Order:</label><span class="inp sel">Priority Desc</span></div>
    <div class="fc"><label style="letter-spacing:0.342px">Limit:</label><span class="inp sel">30 Item(s)</span></div>
   </div>
   <div class="fr">
    <div class="fc bulk"><span class="inp sel">Bulk Action</span><a class="btn perform">Perform</a></div>
   </div>
  </form>
  <table class="tbl">
   <colgroup><col style="width:57px"><col style="width:48px"><col style="width:480px"><col style="width:149px"><col style="width:81px"><col style="width:73px"><col style="width:95px"><col style="width:87px"><col style="width:56px"><col style="width:105px"><col style="width:81px"><col style="width:115px"><col style="width:117px"><col style="width:93px"></colgroup>
   <thead><tr><th class="c"><span class="cb"></span></th><th class="c">Id</th><th>Title</th><th class="c">Type</th><th>Parent<br>Post</th><th class="c">Status</th><th>Author</th><th class="c">Priority <svg class="i ed" viewBox="0 0 576 512"><use href="#i-edit"/></svg></th><th class="c">Terms</th><th class="c">Comment<br>Status</th><th class="c">Comments</th><th class="c">Created At</th><th class="c">Updated At</th><th class="c">Actions</th></tr></thead>
   <tbody>
<tr><td class="c"><span class="cb"></span></td><td class="c n">935</td><td class="tt"><a style="letter-spacing:-0.266px">Hướng dẫn tích hợp KaTeX để hiển thị công thức toán học</a></td><td class="c">Project Technical<br>Document</td><td></td><td class="c pub">Published</td><td><a>Young<br>Monkeys</a></td><td class="c n">1,001 <svg class="i ed" viewBox="0 0 576 512"><use href="#i-edit"/></svg></td><td></td><td class="c">Close</td><td class="c">0</td><td class="c d">2026-03-07<br>10:57:25</td><td class="c d">2026-03-09<br>21:58:11</td><td class="c act"><svg class="i pn" viewBox="0 0 512 512"><use href="#i-pen"/></svg><svg class="i tr" viewBox="0 0 448 512"><use href="#i-trash"/></svg></td></tr>
<tr><td class="c"><span class="cb"></span></td><td class="c n">1006</td><td class="tt"><a style="letter-spacing:-0.235px">Vì sao EzyArticle cho phép quản trị viên low code qua vscode nhưng vẫn đảm bảo được khả năng bảo mật?</a></td><td class="c">Project Technical<br>Document</td><td></td><td class="c pub">Published</td><td><a>Young<br>Monkeys</a></td><td class="c n">1,000 <svg class="i ed" viewBox="0 0 576 512"><use href="#i-edit"/></svg></td><td></td><td class="c">Close</td><td class="c">0</td><td class="c d">2026-03-28<br>20:55:38</td><td class="c d">2026-03-28<br>20:56:11</td><td class="c act"><svg class="i pn" viewBox="0 0 512 512"><use href="#i-pen"/></svg><svg class="i tr" viewBox="0 0 448 512"><use href="#i-trash"/></svg></td></tr>
<tr><td class="c"><span class="cb"></span></td><td class="c n">934</td><td class="tt"><a style="letter-spacing:-0.258px">Hướng dẫn tích hợp Mermaid Diagram</a></td><td class="c">Project Technical<br>Document</td><td></td><td class="c pub">Published</td><td><a>Young<br>Monkeys</a></td><td class="c n">1,000 <svg class="i ed" viewBox="0 0 576 512"><use href="#i-edit"/></svg></td><td></td><td class="c">Close</td><td class="c">0</td><td class="c d">2026-03-07<br>10:54:35</td><td class="c d">2026-03-07<br>10:56:12</td><td class="c act"><svg class="i pn" viewBox="0 0 512 512"><use href="#i-pen"/></svg><svg class="i tr" viewBox="0 0 448 512"><use href="#i-trash"/></svg></td></tr>
<tr><td class="c"><span class="cb"></span></td><td class="c n">925</td><td class="tt"><a style="letter-spacing:-0.287px">Hướng dẫn sử dụng EzyArticle Visual Studio Code extension</a></td><td class="c">Project Technical<br>Document</td><td></td><td class="c pub">Published</td><td><a>Young<br>Monkeys</a></td><td class="c n">1,000 <svg class="i ed" viewBox="0 0 576 512"><use href="#i-edit"/></svg></td><td></td><td class="c">Close</td><td class="c">0</td><td class="c d">2026-02-25<br>11:19:01</td><td class="c d">2026-02-27<br>14:48:48</td><td class="c act"><svg class="i pn" viewBox="0 0 512 512"><use href="#i-pen"/></svg><svg class="i tr" viewBox="0 0 448 512"><use href="#i-trash"/></svg></td></tr>
<tr><td class="c"><span class="cb"></span></td><td class="c n">717</td><td class="tt"><a style="letter-spacing:-0.175px">How long does the plugin review process take?</a></td><td class="c">Faq</td><td></td><td class="c pub">Published</td><td><a>Young<br>Monkeys</a></td><td class="c n">201 <svg class="i ed" viewBox="0 0 576 512"><use href="#i-edit"/></svg></td><td></td><td class="c">Close</td><td class="c">0</td><td class="c d">2025-09-22<br>21:00:57</td><td class="c d">2025-12-19<br>08:54:03</td><td class="c act"><svg class="i pn" viewBox="0 0 512 512"><use href="#i-pen"/></svg><svg class="i tr" viewBox="0 0 448 512"><use href="#i-trash"/></svg></td></tr>
<tr><td class="c"><span class="cb"></span></td><td class="c n">711</td><td class="tt"><a style="letter-spacing:-0.095px">What are the approval conditions for a plugin to be published on the marketplace?</a></td><td class="c">Faq</td><td></td><td class="c pub">Published</td><td><a>Young<br>Monkeys</a></td><td class="c n">200 <svg class="i ed" viewBox="0 0 576 512"><use href="#i-edit"/></svg></td><td></td><td class="c">Close</td><td class="c">0</td><td class="c d">2025-08-28<br>09:34:47</td><td class="c d">2026-02-05<br>15:55:31</td><td class="c act"><svg class="i pn" viewBox="0 0 512 512"><use href="#i-pen"/></svg><svg class="i tr" viewBox="0 0 448 512"><use href="#i-trash"/></svg></td></tr>
<tr><td class="c"><span class="cb"></span></td><td class="c n">16</td><td class="tt"><a style="letter-spacing:-0.098px">Are the default indexes for ezyplatform tables optimized?</a></td><td class="c">Faq</td><td></td><td class="c pub">Published</td><td><a>Young<br>Monkeys</a></td><td class="c n">101 <svg class="i ed" viewBox="0 0 576 512"><use href="#i-edit"/></svg></td><td></td><td class="c">Close</td><td class="c">0</td><td class="c d">2023-09-07<br>22:11:49</td><td class="c d">2024-01-22<br>17:23:02</td><td class="c act"><svg class="i pn" viewBox="0 0 512 512"><use href="#i-pen"/></svg><svg class="i tr" viewBox="0 0 448 512"><use href="#i-trash"/></svg></td></tr>
<tr><td class="c"><span class="cb"></span></td><td class="c n">7</td><td class="tt"><a style="letter-spacing:-0.196px">Can I use EzyPlatform in commercial products?</a></td><td class="c">Faq</td><td></td><td class="c pub">Published</td><td><a>Young<br>Monkeys</a></td><td class="c n">100 <svg class="i ed" viewBox="0 0 576 512"><use href="#i-edit"/></svg></td><td></td><td class="c">Close</td><td class="c">0</td><td class="c d">2022-08-08<br>03:15:47</td><td class="c d">2023-07-01<br>23:09:59</td><td class="c act"><svg class="i pn" viewBox="0 0 512 512"><use href="#i-pen"/></svg><svg class="i tr" viewBox="0 0 448 512"><use href="#i-trash"/></svg></td></tr>
<tr><td class="c"><span class="cb"></span></td><td class="c n">1036</td><td class="tt"><a style="letter-spacing:-0.206px">Hướng dẫn bổ sung thêm các thành phần mô tả cho sản phẩm</a></td><td class="c">Project Document</td><td></td><td class="c pub">Published</td><td><a>Young<br>Monkeys</a></td><td class="c n">31 <svg class="i ed" viewBox="0 0 576 512"><use href="#i-edit"/></svg></td><td></td><td class="c">Close</td><td class="c">0</td><td class="c d">2026-04-13<br>14:59:28</td><td class="c d">2026-04-13<br>18:03:53</td><td class="c act"><svg class="i pn" viewBox="0 0 512 512"><use href="#i-pen"/></svg><svg class="i tr" viewBox="0 0 448 512"><use href="#i-trash"/></svg></td></tr>
<tr><td class="c"><span class="cb"></span></td><td class="c n">1005</td><td class="tt"><a style="letter-spacing:-0.162px">Hướng dẫn cách set up các dịch vụ thanh toán trong Admin cho website thời trang</a></td><td class="c">Project Document</td><td></td><td class="c pub">Published</td><td><a>Young<br>Monkeys</a></td><td class="c n">30 <svg class="i ed" viewBox="0 0 576 512"><use href="#i-edit"/></svg></td><td></td><td class="c">Close</td><td class="c">0</td><td class="c d">2026-03-27<br>21:56:08</td><td class="c d">2026-04-07<br>16:34:15</td><td class="c act"><svg class="i pn" viewBox="0 0 512 512"><use href="#i-pen"/></svg><svg class="i tr" viewBox="0 0 448 512"><use href="#i-trash"/></svg></td></tr>
   </tbody>
  </table>
 </main>
 <div class="fab"><svg viewBox="0 0 18 16" width="18" height="16"><defs><linearGradient id="bg" gradientUnits="userSpaceOnUse" x1="1" y1="2" x2="17" y2="14"><stop offset="0" stop-color="#ff8a1e"/><stop offset=".16" stop-color="#f23aa8"/><stop offset=".36" stop-color="#e02fd0"/><stop offset=".55" stop-color="#9540ea"/><stop offset=".78" stop-color="#5a5cf0"/><stop offset="1" stop-color="#2ea8ff"/></linearGradient></defs><g fill="url(#bg)"><circle cx="6.200" cy="2.700" r="2.400"/><circle cx="3.700" cy="4.600" r="2.300"/><circle cx="2.700" cy="8" r="2.500"/><circle cx="3.900" cy="11.300" r="2.300"/><circle cx="6.200" cy="13.300" r="2.400"/><rect x="3.500" y="2.500" width="4.900" height="11.500" rx="1"/><circle cx="11.800" cy="2.700" r="2.400"/><circle cx="14.300" cy="4.600" r="2.300"/><circle cx="15.300" cy="8" r="2.500"/><circle cx="14.100" cy="11.300" r="2.300"/><circle cx="11.800" cy="13.300" r="2.400"/><rect x="9.600" y="2.500" width="4.900" height="11.500" rx="1"/></g><g stroke="#fff" stroke-width=".8" fill="none" stroke-linecap="round" opacity=".85"><path d="M4.600 4.300h2.600M3 8h4.500M4.600 11.600h2.600"/><path d="M11 4.600l1.300-1 1.300 1M12.300 7.500l1.300 1 1.300-1M11 11.400l1.300 1 1.300-1"/></g></svg></div>
</div>

</body></html>
